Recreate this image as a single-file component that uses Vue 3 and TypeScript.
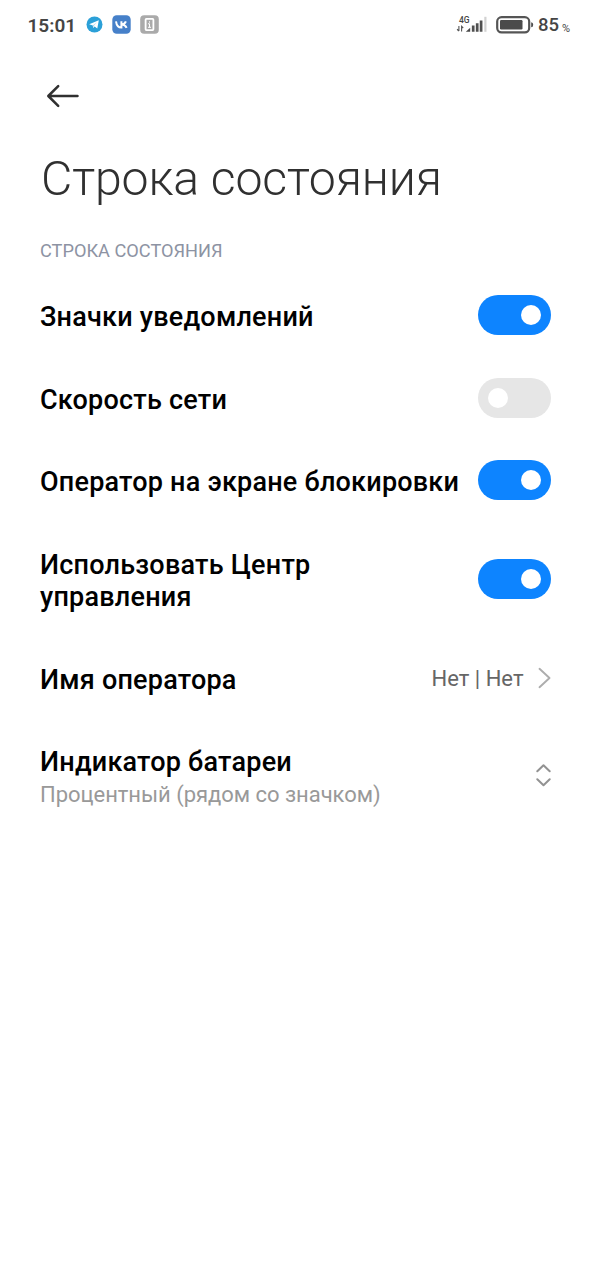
<script setup lang="ts">
import { ref } from 'vue'

interface ToggleRow {
  label: string
  on: boolean
}

const toggles = ref<ToggleRow[]>([
  { label: 'Значки уведомлений', on: true },
  { label: 'Скорость сети', on: false },
  { label: 'Оператор на экране блокировки', on: true },
  { label: 'Использовать Центр управления', on: true },
])
</script>

<template>
  <div class="screen">
    <header class="status">
      <span class="time">15:01</span>
      <svg class="app-icon telegram" width="17" height="17" viewBox="0 0 17 17">
        <circle cx="8.5" cy="8.5" r="8" fill="#2ba0d8" />
        <path d="M3.2 8.3 12.8 4.3 11.3 12.5 8.6 10.6 7.2 12 6.8 9.6Z" fill="#fff" />
        <path d="M6.8 9.6 10.8 6.3 7.7 10.1 7.2 12Z" fill="#a9d6ee" />
      </svg>
      <svg class="app-icon vk" width="19" height="19" viewBox="0 0 19 19">
        <rect x="0.3" y="0.3" width="18.4" height="18.4" rx="4.4" fill="#4680c9" />
        <path d="M4 6.3C4.6 10.6 6.3 12.6 9.4 12.6V6.3M9.4 9.5C11.8 9.3 13.2 8.2 13.9 6.3M9.8 9.5C12.2 9.7 13.7 10.8 14.6 12.8" fill="none" stroke="#fff" stroke-width="2" />
      </svg>
      <svg class="app-icon" width="19" height="19" viewBox="0 0 19 19">
        <rect x="0.2" y="0.2" width="18.6" height="18.6" rx="4" fill="#aaa" />
        <rect x="5.6" y="3.9" width="7.8" height="11.2" rx="0.8" fill="none" stroke="#fff" stroke-width="1.8" />
        <path d="M9.5 6.3V7.6M9.5 8.8V12.3M8 8.8H9.5M8 12.3H11" stroke="#fff" stroke-width="1" />
      </svg>
      <div class="spacer"></div>
      <div class="network">
        <span class="gen">4G</span>
        <svg width="32" height="18" viewBox="0 0 32 18">
          <path d="M2.9 10V15M1.1 13.2 2.7 15.2M5.6 15.4V10.3L7.2 12" fill="none" stroke="#555" stroke-width="1.1" />
          <path d="M9.8 15.8 14.2 11.8V15.8Z" fill="#484848" />
          <path d="M17.2 15.8V9.6M21.2 15.8V7.2M25.1 15.8V4.6" stroke="#505050" stroke-width="2.7" />
          <path d="M29.4 15.8V0.8" stroke="#d2d2d2" stroke-width="2.2" />
        </svg>
      </div>
      <svg class="battery" width="38" height="18" viewBox="0 0 38 18">
        <rect x="1.2" y="1.2" width="32" height="15.2" rx="4.4" fill="none" stroke="#555" stroke-width="2.2" />
        <rect x="4" y="4.1" width="22.5" height="9.4" rx="1.2" fill="#4b4b4b" />
        <path d="M35.2 6.3Q37.2 6.3 37.2 8.8T35.2 11.3Z" fill="#4b4b4b" />
      </svg>
      <span class="level">85</span>
      <span class="percent">%</span>
    </header>

    <button class="back" aria-label="Назад">
      <svg width="34" height="24" viewBox="0 0 34 24">
        <path d="M31.5 12H2.5M12.2 2.2 2.3 12 12.2 21.8" fill="none" stroke="#303030" stroke-width="2.5" stroke-linecap="round" stroke-linejoin="round" />
      </svg>
    </button>

    <h1 class="title">Строка состояния</h1>
    <h2 class="section">СТРОКА СОСТОЯНИЯ</h2>

    <main class="list">
      <div v-for="row in toggles" :key="row.label" class="row">
        <span class="label">{{ row.label }}</span>
        <button class="switch" :class="{ on: row.on }" role="switch" :aria-checked="row.on" @click="row.on = !row.on">
          <span class="knob"></span>
        </button>
      </div>
      <div class="row">
        <span class="label">Имя оператора</span>
        <span class="value">Нет | Нет</span>
        <svg class="chevron" width="14" height="22" viewBox="0 0 14 22">
          <path d="M2.5 1.8 12.5 11 2.5 20.2" fill="none" stroke="#adadad" stroke-width="1.9" stroke-linecap="round" stroke-linejoin="round" />
        </svg>
      </div>
      <div class="row battery-row">
        <div class="label">
          Индикатор батареи
          <div class="hint">Процентный (рядом со значком)</div>
        </div>
        <svg class="updown" width="16" height="24" viewBox="0 0 16 24">
          <path d="M2.3 8.2 8.5 2.2 14.7 8.2M2.3 16.2 8.5 22.2 14.7 16.2" fill="none" stroke="#929292" stroke-width="2" stroke-linecap="round" stroke-linejoin="round" />
        </svg>
      </div>
    </main>
  </div>
</template>

<style>
body {
  background: #fff;
}
</style>

<style scoped>
.screen {
  width: 591px;
  height: 1280px;
  box-sizing: border-box;
  overflow: hidden;
  background: #fff;
  color: #000;
  font-family: Roboto, 'Liberation Sans', sans-serif;
}

button {
  padding: 0;
  border: 0;
  background: none;
  flex: none;
}

svg {
  display: block;
  flex: none;
}

.status {
  display: flex;
  align-items: center;
  height: 49px;
  padding: 0 20px 0 27.5px;
  color: #454545;
}

.time {
  width: 50px;
  margin-right: 8.5px;
  padding-top: 1px;
  font-size: 19px;
  font-weight: 600;
  white-space: nowrap;
}

.telegram {
  margin-right: 9px;
}

.vk {
  margin-right: 9px;
}

.spacer {
  flex: 1;
}

.network {
  display: grid;
  margin-right: 8px;
}

.network > * {
  grid-area: 1 / 1;
}

.gen {
  padding-left: 3px;
  font-size: 8.5px;
  line-height: 8px;
  font-weight: 500;
}

.battery {
  margin-right: 4px;
}

.level {
  width: 21px;
  margin-right: 3px;
  padding-top: 1px;
  font-size: 18.5px;
  font-weight: 500;
}

.percent {
  width: 9px;
  padding-top: 7px;
  font-size: 11px;
  font-weight: 400;
}

.back {
  display: block;
  margin: 35px 0 0 46px;
}

.title {
  margin: 41.5px 0 0 41px;
  font-size: 48.2px;
  line-height: 58px;
  font-weight: 300;
  letter-spacing: -0.12px;
  color: #303030;
  white-space: nowrap;
}

.section {
  margin: 32px 0 0 40px;
  font-size: 18.2px;
  line-height: 22px;
  font-weight: 400;
  color: #8d93a3;
  white-space: nowrap;
}

.list {
  padding: 12.25px 40.5px 0 40px;
}

.row {
  display: flex;
  align-items: center;
  min-height: 82.5px;
}

.label {
  flex: 1;
  padding: 27.25px 0 22.75px;
  font-size: 27px;
  line-height: 32.5px;
  font-weight: 500;
  letter-spacing: 0.22px;
}

.switch {
  display: flex;
  align-items: center;
  width: 72.5px;
  height: 40px;
  margin-left: 16px;
  padding: 0 10px;
  border-radius: 20px;
  background: #e6e6e6;
}

.switch.on {
  justify-content: flex-end;
  background: #0d84ff;
}

.knob {
  width: 20px;
  height: 20px;
  border-radius: 50%;
  background: #fff;
}

.value {
  padding-top: 2px;
  margin-right: 13px;
  font-size: 22px;
  color: #666;
}

.battery-row {
  height: 112px;
}

.battery-row .label {
  padding: 8px 0 0;
}

.hint {
  margin-top: 1px;
  font-size: 22px;
  font-weight: 400;
  letter-spacing: -0.03px;
  color: #999;
}
</style>
